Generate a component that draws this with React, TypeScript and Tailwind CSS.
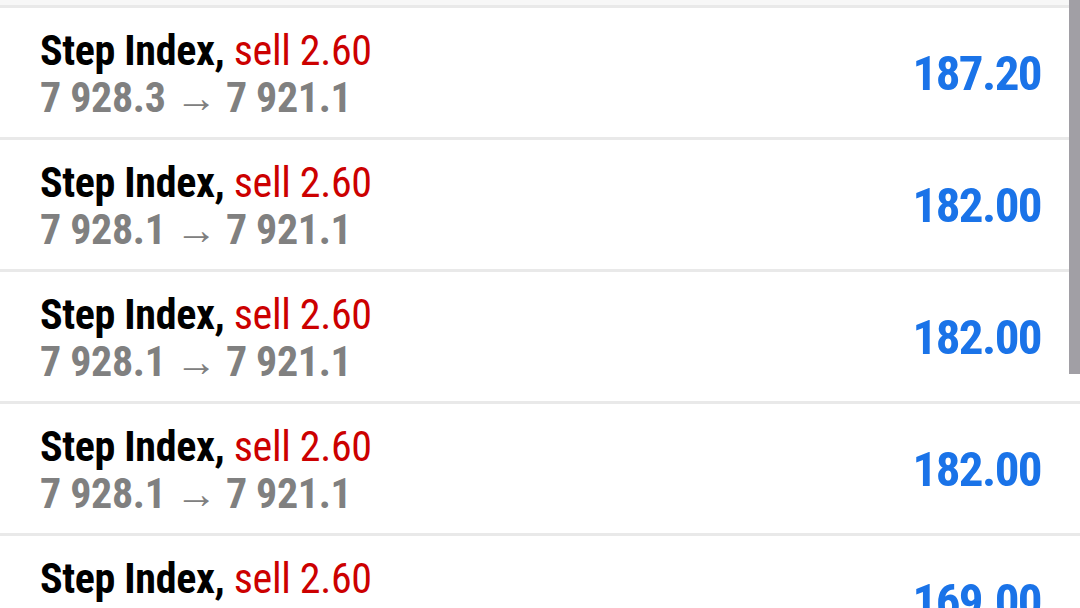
import React from 'react';

type Deal = { open: string; close: string; profit: string };

const deals: Deal[] = [
  { open: '7 928.3', close: '7 921.1', profit: '187.20' },
  { open: '7 928.1', close: '7 921.1', profit: '182.00' },
  { open: '7 928.1', close: '7 921.1', profit: '182.00' },
  { open: '7 928.1', close: '7 921.1', profit: '182.00' },
  { open: '7 928.1', close: '7 921.1', profit: '169.00' },
];

const DealRow: React.FC<{ deal: Deal }> = ({ deal }) => (
  <div className="flex items-center justify-between h-[132px] shrink-0 border-b-[3px] border-[#e9e9e9] pl-[40px] pr-[39px] pt-[3px] bg-white">
    <div className="flex flex-col leading-none">
      <div className="text-[42px] leading-[47px] tracking-[-0.35px] font-stretch-condensed">
        <span className="font-bold text-black">Step Index, </span>
        <span className="text-[#cc0000]">sell 2.60</span>
      </div>
      <div className="text-[42px] leading-[47px] tracking-[-0.35px] font-bold text-[#808080] font-stretch-condensed">
        {deal.open} <span className="font-normal">→</span> {deal.close}
      </div>
    </div>
    <div className="text-[49px] font-bold tracking-[-1.6px] text-[#1a73e8] font-stretch-condensed">{deal.profit}</div>
  </div>
);

export default function App() {
  return (
    <div className="relative flex flex-col w-[1080px] h-[608px] overflow-hidden bg-white" style={{ fontFamily: 'Roboto, "Noto Sans", sans-serif' }}>
      <div className="h-[5px] shrink-0 bg-[#f7f7f7] border-b-[3px] border-[#e9e9e9] box-content" />
      {deals.map((d, i) => (
        <DealRow key={i} deal={d} />
      ))}
      <div className="absolute right-0 top-0 w-[11px] h-[374px] bg-[#a19fa5]" />
    </div>
  );
}
